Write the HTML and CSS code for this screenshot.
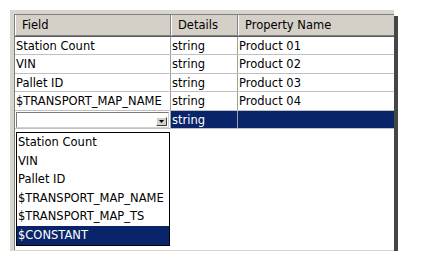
FILE: index.html
```html
<!DOCTYPE html>
<html>
<head>
<meta charset="utf-8">
<link rel="stylesheet" href="styles.css">
</head>
<body>
<div class="window">
  <div class="grid">
    <div class="head">
      <div class="hc c1">Field</div>
      <div class="hc c2">Details</div>
      <div class="hc c3">Property Name</div>
    </div>
    <div class="row"><div class="cell c1">Station Count</div><div class="cell c2">string</div><div class="cell c3">Product 01</div></div>
    <div class="row"><div class="cell c1">VIN</div><div class="cell c2">string</div><div class="cell c3">Product 02</div></div>
    <div class="row"><div class="cell c1">Pallet ID</div><div class="cell c2">string</div><div class="cell c3">Product 03</div></div>
    <div class="row"><div class="cell c1">$TRANSPORT_MAP_NAME</div><div class="cell c2">string</div><div class="cell c3">Product 04</div></div>
    <div class="row sel">
      <div class="cell c1 combo-cell">
        <div class="combo">
          <span class="btn"><svg width="5" height="3" viewBox="0 0 5 3"><path d="M0 0H5L2.5 3Z" fill="#000"/></svg></span>
        </div>
      </div>
      <div class="cell c2">string</div>
      <div class="cell c3"></div>
    </div>
    <ul class="dropdown">
      <li>Station Count</li>
      <li class="short">VIN</li>
      <li>Pallet ID</li>
      <li class="short">$TRANSPORT_MAP_NAME</li>
      <li>$TRANSPORT_MAP_TS</li>
      <li class="picked">$CONSTANT</li>
    </ul>
  </div>
</div>
</body>
</html>
```
FILE: styles.css
```css
* { box-sizing: border-box; }
body {
  margin: 0;
  background: #fff;
  font-family: "DejaVu Sans", sans-serif;
  font-size: 11.5px;
  color: #000;
}
.window {
  margin: 10px 0 0 10px;
  width: 384px;
  height: 241px;
  background: #d8d5ce;
  padding: 4px 0 0 4px;
  box-shadow: 4px 6px 0 #464646;
}
.grid {
  position: relative;
  height: 236px;
  background: #fff;
  border-top: 1px solid #808080;
  border-left: 1px solid #808080;
}
.head {
  display: flex;
  height: 22px;
  background: #d4d0c8;
  border-bottom: 1px solid #5a5a5a;
}
.hc {
  height: 21px;
  line-height: 21px;
  padding-left: 6px;
  border-left: 1px solid #fff;
  border-right: 1px solid #808080;
  border-bottom: 1px solid #808080;
  white-space: nowrap;
}
.c1 { width: 156px; flex: none; }
.c2 { width: 67px; flex: none; }
.c3 { flex: 1; }
.hc.c3 { border-right: none; }
.row {
  display: flex;
  height: 18px;
  border-bottom: 1px solid #c0c0c0;
}
.row:nth-child(odd) { height: 19px; }
.cell {
  padding: 2px 0 0 1px;
  line-height: 15px;
  border-right: 1px solid #a0a0a0;
  white-space: nowrap;
  overflow: hidden;
}
.cell.c3 { border-right: none; }
.sel .c2, .sel .c3 {
  background: #0a246a;
  color: #fff;
}
.combo-cell { padding: 1px 1px 0 1px; }
.combo {
  height: 16px;
  background: #fff;
  border: 1px solid;
  border-color: #7a7a7a #d4d0c8 #d4d0c8 #7a7a7a;
  display: flex;
  justify-content: flex-end;
  align-items: flex-end;
  padding: 0 1px 1px 0;
}
.btn {
  width: 11px;
  height: 9px;
  background: #d4d0c8;
  border: 1px solid;
  border-color: #fff #404040 #404040 #fff;
  display: flex;
  align-items: center;
  justify-content: center;
}
.btn svg { display: block; }
.dropdown {
  position: absolute;
  left: 1px;
  top: 117px;
  width: 154px;
  height: 114px;
  margin: 0;
  padding: 0;
  list-style: none;
  background: #fff;
  border: 1px solid #000;
}
.dropdown li {
  height: 19px;
  line-height: 19px;
  padding-left: 1px;
  white-space: nowrap;
}
.dropdown li.short {
  height: 18px;
  line-height: 18px;
}
.dropdown li.picked {
  background: #0a246a;
  color: #fff;
}
```
